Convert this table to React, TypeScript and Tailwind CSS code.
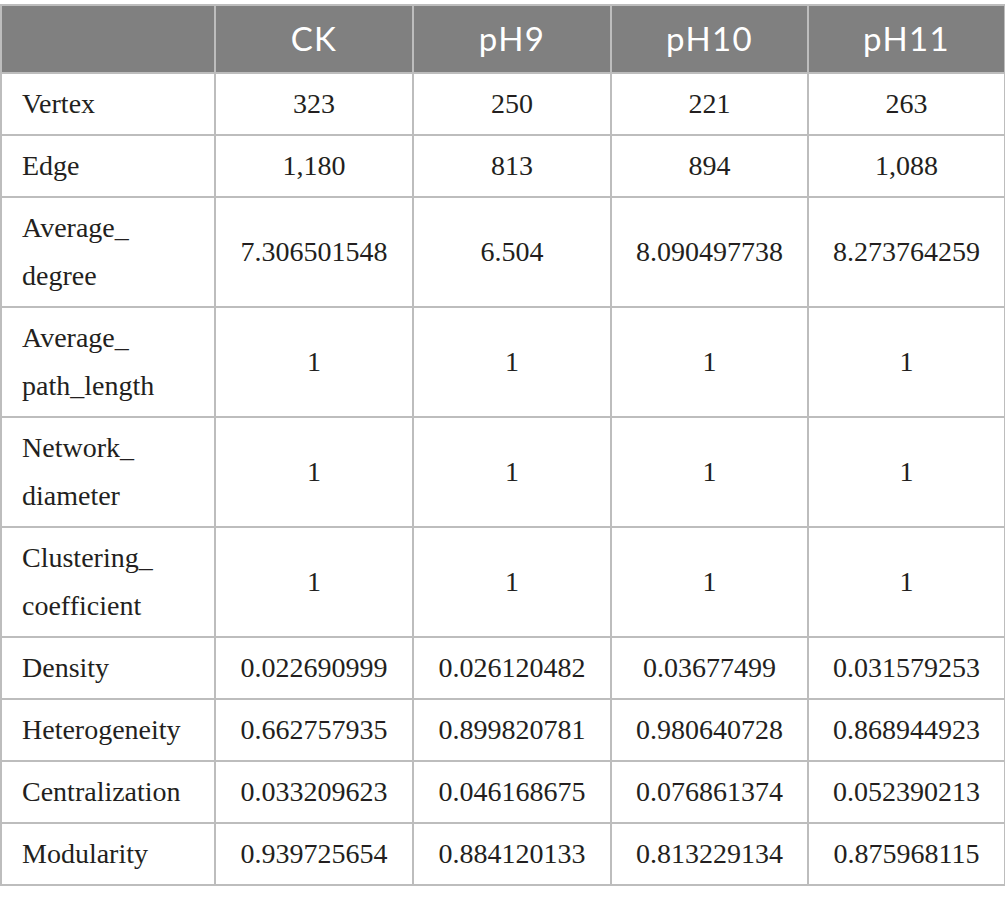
const header = ['', 'CK', 'pH9', 'pH10', 'pH11'];

const rows: [string, string, string, string, string][] = [
  ['Vertex', '323', '250', '221', '263'],
  ['Edge', '1,180', '813', '894', '1,088'],
  ['Average_ degree', '7.306501548', '6.504', '8.090497738', '8.273764259'],
  ['Average_ path_length', '1', '1', '1', '1'],
  ['Network_ diameter', '1', '1', '1', '1'],
  ['Clustering_ coefficient', '1', '1', '1', '1'],
  ['Density', '0.022690999', '0.026120482', '0.03677499', '0.031579253'],
  ['Heterogeneity', '0.662757935', '0.899820781', '0.980640728', '0.868944923'],
  ['Centralization', '0.033209623', '0.046168675', '0.076861374', '0.052390213'],
  ['Modularity', '0.939725654', '0.884120133', '0.813229134', '0.875968115'],
];

export default function App() {
  return (
    <div className="w-[1005px] h-[905px] bg-white pt-[4px]">
      <table
        className="w-[1004px] border-collapse table-fixed text-[#231f20]"
        style={{ fontFamily: '"Liberation Serif", "DejaVu Serif", serif' }}
      >
        <colgroup>
          <col className="w-[214px]" />
          <col className="w-[198px]" />
          <col className="w-[198px]" />
          <col className="w-[197px]" />
          <col className="w-[197px]" />
        </colgroup>
        <thead>
          <tr className="bg-[#808080] h-[68px]">
            {header.map((h, i) => (
              <th
                key={i}
                className="border-2 border-[#bdbdbd] text-center text-white font-normal text-[33px] tracking-[0.04em]"
                style={{ fontFamily: 'Lato, "Open Sans", sans-serif' }}
              >
                {h}
              </th>
            ))}
          </tr>
        </thead>
        <tbody>
          {rows.map((r, ri) => (
            <tr key={ri}>
              {r.map((c, ci) => (
                <td
                  key={ci}
                  className={`border-2 border-[#bdbdbd] text-[28px] leading-[48px] py-[6px] ${
                    ci === 0 ? 'text-left pl-[20px] pr-[8px]' : 'text-center px-[6px]'
                  }`}
                >
                  {ci === 0 && c.includes(' ') ? (
                    <>
                      {c.split(' ')[0]}
                      <br />
                      {c.split(' ')[1]}
                    </>
                  ) : (
                    c
                  )}
                </td>
              ))}
            </tr>
          ))}
        </tbody>
      </table>
    </div>
  );
}
